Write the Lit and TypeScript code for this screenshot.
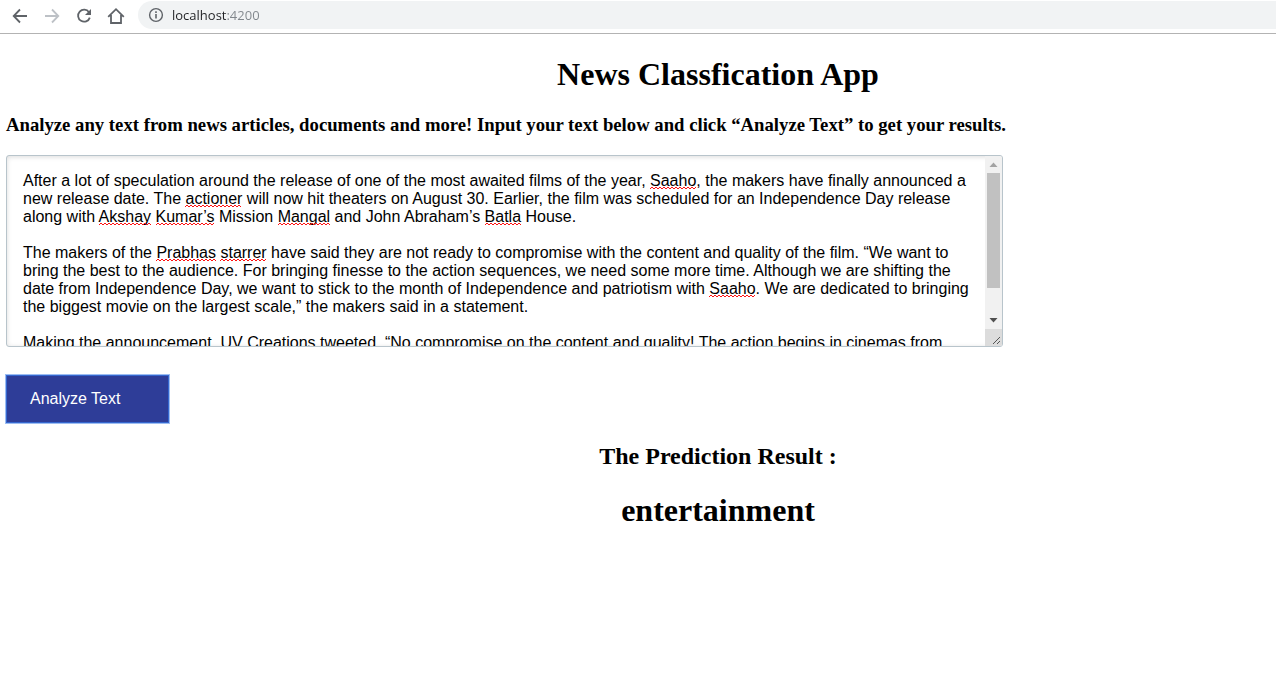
import { LitElement, html, css } from "lit";
import { customElement, property, state } from "lit/decorators.js";

const ARTICLE = `After a lot of speculation around the release of one of the most awaited films of the year, Saaho, the makers have finally announced a new release date. The actioner will now hit theaters on August 30. Earlier, the film was scheduled for an Independence Day release along with Akshay Kumar’s Mission Mangal and John Abraham’s Batla House.

The makers of the Prabhas starrer have said they are not ready to compromise with the content and quality of the film. “We want to bring the best to the audience. For bringing finesse to the action sequences, we need some more time. Although we are shifting the date from Independence Day, we want to stick to the month of Independence and patriotism with Saaho. We are dedicated to bringing the biggest movie on the largest scale,” the makers said in a statement.

Making the announcement, UV Creations tweeted, “No compromise on the content and quality! The action begins in cinemas from`;

const UNKNOWN_WORDS = /Saaho|actioner|Akshay|Kumar’s|Mangal|Batla|Prabhas|starrer/g;

@customElement("browser-bar")
export class BrowserBar extends LitElement {
  static styles = css`
    :host {
      display: block;
      background: #fff;
      border-bottom: 1px solid #b3b3b3;
      font-family: "Open Sans", "Noto Sans", sans-serif;
    }
    .bar {
      display: flex;
      align-items: center;
      height: 33px;
      padding-left: 4px;
    }
    .nav {
      display: flex;
      align-items: center;
      justify-content: center;
      width: 32px;
      height: 28px;
      padding: 0 0 2px;
      border: 0;
      background: none;
      color: #5f6368;
    }
    .nav:disabled {
      color: #bdc1c6;
    }
    .address {
      display: flex;
      flex: 1;
      align-items: center;
      gap: 8px;
      box-sizing: border-box;
      height: 28px;
      margin: 0 0 3px 6px;
      padding-left: 10px;
      border-radius: 14px 0 0 14px;
      background: #f1f3f4;
      color: #5f6368;
    }
    .url {
      flex: 1;
      min-width: 0;
      padding: 0;
      border: 0;
      outline: 0;
      font: 13px/20px "Open Sans", "Noto Sans", sans-serif;
      color: #202124;
      -webkit-text-fill-color: transparent;
      background: linear-gradient(to right, #202124 55px, #80868b 55px);
      -webkit-background-clip: text;
      background-clip: text;
    }
    svg {
      display: block;
      fill: none;
      stroke: currentColor;
      stroke-width: 1.8;
    }
  `;

  render() {
    return html`
      <div class="bar">
        <button class="nav" aria-label="Back">
          <svg width="16" height="16" viewBox="0 0 16 16"><path d="M15 8H2M8 1.5L1.7 8L8 14.5" /></svg>
        </button>
        <button class="nav" aria-label="Forward" disabled>
          <svg width="16" height="16" viewBox="0 0 16 16"><path d="M1 8H14M8 1.5L14.3 8L8 14.5" /></svg>
        </button>
        <button class="nav" aria-label="Reload">
          <svg width="16" height="16" viewBox="0 0 16 16">
            <path d="M13 4.2A6 6 0 1 0 13.8 9.6" />
            <path d="M15 1V7H9Z" fill="currentColor" stroke="none" />
          </svg>
        </button>
        <button class="nav" aria-label="Home">
          <svg width="18" height="18" viewBox="0 0 18 18"><path d="M1.2 9.8L9 2.2L16.8 9.8M4 8V16H14V8" /></svg>
        </button>
        <div class="address">
          <svg width="16" height="16" viewBox="0 0 16 16" aria-hidden="true">
            <circle cx="8" cy="8" r="6.4" stroke-width="1.4" />
            <path d="M8 7V11.5M8 4.3V6" stroke-width="1.6" />
          </svg>
          <input class="url" type="text" aria-label="Address" value="localhost:4200" />
        </div>
      </div>
    `;
  }
}

@customElement("news-editor")
export class NewsEditor extends LitElement {
  static styles = css`
    :host {
      display: block;
    }
    .box {
      position: relative;
      height: 192px;
      box-sizing: border-box;
      overflow: hidden;
      border: 1px solid #b8c4cb;
      border-radius: 3px;
      background: #fff;
    }
    .text,
    .measure {
      box-sizing: border-box;
      width: 100%;
      height: 100%;
      margin: 0;
      padding: 16px 33px 0 16px;
      border: 0;
      font: 16px/18px "Liberation Sans", Arial, sans-serif;
      white-space: pre-wrap;
      overflow-wrap: break-word;
    }
    .text {
      display: block;
      resize: none;
      outline: 0;
      overflow-y: auto;
      scrollbar-width: none;
      color: #000;
      background: transparent;
      box-shadow: inset 0 1px 5px rgba(0, 0, 0, 0.14);
    }
    .measure {
      position: absolute;
      inset: 0;
      visibility: hidden;
    }
    .marks {
      position: absolute;
      inset: 0;
      width: 100%;
      height: 100%;
      pointer-events: none;
      fill: none;
      stroke: #ff1010;
      stroke-width: 1;
    }
    .scroll {
      position: absolute;
      inset: 0 0 0 auto;
      display: flex;
      flex-direction: column;
      width: 17px;
      background: #f1f1f1;
    }
    .arrow {
      display: block;
      height: 17px;
      fill: #505050;
    }
    .arrow.up {
      fill: #a3a3a3;
    }
    .track {
      flex: 1;
      padding: 0 2px;
    }
    .thumb {
      height: 83%;
      background: #c1c1c1;
    }
    .grip {
      display: block;
      height: 17px;
      background: #dcdcdc;
      stroke: #555;
    }
  `;

  @property() value = "";
  @state() private squiggles = "";
  @state() private scrolled = 0;

  private observer = new ResizeObserver(() => this.findMistakes(this.currentText));

  private get currentText() {
    return this.renderRoot.querySelector("textarea")?.value ?? this.value;
  }

  firstUpdated() {
    this.findMistakes(this.currentText);
    this.observer.observe(this);
  }

  disconnectedCallback() {
    super.disconnectedCallback();
    this.observer.disconnect();
  }

  // Lays the text out once in a throwaway block and turns each unknown word's box into a zigzag path.
  private findMistakes(content: string) {
    const box = this.renderRoot.querySelector(".box");
    if (!box) return;
    const block = document.createElement("div");
    block.className = "measure";
    const text = document.createTextNode(content);
    block.append(text);
    box.append(block);
    const origin = block.getBoundingClientRect();
    const range = document.createRange();
    let path = "";
    for (const match of content.matchAll(UNKNOWN_WORDS)) {
      range.setStart(text, match.index!);
      range.setEnd(text, match.index! + match[0].length);
      for (const r of Array.from(range.getClientRects())) {
        const left = Math.round(r.left - origin.left);
        const right = Math.round(r.right - origin.left);
        const y = Math.round(r.bottom - origin.top);
        path += `M${left} ${y}`;
        for (let x = left + 2, low = false; x <= right; x += 2, low = !low) {
          path += `L${x} ${low ? y : y - 2}`;
        }
      }
    }
    block.remove();
    this.squiggles = path;
  }

  render() {
    return html`
      <div class="box">
        <textarea
          class="text"
          aria-label="News text"
          spellcheck="false"
          .defaultValue=${this.value}
          @input=${this.onInput}
          @scroll=${this.onScroll}
        ></textarea>
        <svg class="marks" aria-hidden="true">
          <g transform="translate(0 ${-this.scrolled})"><path d=${this.squiggles} /></g>
        </svg>
        <div class="scroll" aria-hidden="true">
          <svg class="arrow up" width="17" height="17" viewBox="0 0 17 17"><path d="M4.5 11L8.5 6.5L12.5 11Z" /></svg>
          <div class="track"><div class="thumb"></div></div>
          <svg class="arrow" width="17" height="17" viewBox="0 0 17 17"><path d="M4.5 6L8.5 10.5L12.5 6Z" /></svg>
          <svg class="grip" width="17" height="17" viewBox="0 0 17 17"><path d="M8 15L15 8M12 15L15 12" /></svg>
        </div>
      </div>
    `;
  }

  private onInput() {
    this.findMistakes(this.currentText);
  }

  private onScroll(e: Event) {
    this.scrolled = (e.target as HTMLTextAreaElement).scrollTop;
  }
}

@customElement("app-root")
export class AppRoot extends LitElement {
  static styles = css`
    :host {
      display: block;
      min-height: 100vh;
      background: #fff;
      color: #000;
      font-family: "Liberation Serif", "Times New Roman", serif;
    }
    main {
      padding: 22px 0 0 6px;
    }
    h1,
    h2,
    h3 {
      margin: 0;
      font-weight: bold;
    }
    .title,
    .caption,
    .result {
      padding-left: 154px;
      text-align: center;
    }
    .title,
    .result {
      font-size: 32px;
      line-height: 36px;
    }
    .intro {
      margin: 22px 0 19px;
      line-height: 22px;
    }
    .editor {
      width: 78.5%;
    }
    .analyze {
      display: block;
      box-sizing: border-box;
      width: 163px;
      height: 48px;
      margin: 28px 0 19px;
      padding: 0 23px;
      border: 1px solid #3567cf;
      outline: 1px solid #9dbdf2;
      background: #2e3d98;
      color: #fff;
      font: 16px/18px "Liberation Sans", Arial, sans-serif;
      text-align: left;
    }
    .caption {
      margin-bottom: 22px;
      font-size: 24px;
      line-height: 28px;
    }
  `;

  @state() private prediction = "entertainment";

  render() {
    return html`
      <browser-bar></browser-bar>
      <main>
        <h1 class="title">News Classfication App</h1>
        <h3 class="intro">
          Analyze any text from news articles, documents and more! Input your text below and click “Analyze Text” to get
          your results.
        </h3>
        <news-editor class="editor" .value=${ARTICLE}></news-editor>
        <button class="analyze" type="button">Analyze Text</button>
        <h2 class="caption">The Prediction Result :</h2>
        <h1 class="result">${this.prediction}</h1>
      </main>
    `;
  }
}
